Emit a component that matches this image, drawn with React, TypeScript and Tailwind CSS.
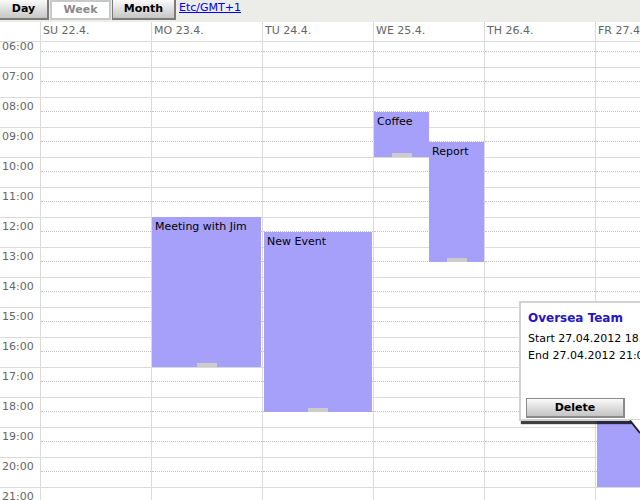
import React from "react";

const days = ["SU 22.4.", "MO 23.4.", "TU 24.4.", "WE 25.4.", "TH 26.4.", "FR 27.4."];
const hours = Array.from({ length: 18 }, (_, i) => i + 6);

type Ev = { day: number; title: string; top: number; height: number; left: number; width: number; hideTitle?: boolean };

// top/height in px from 06:00 (30px per hour)
const events: Ev[] = [
  { day: 1, title: "Meeting with Jim", top: 180, height: 150, left: 0, width: 109 },
  { day: 2, title: "New Event", top: 195, height: 180, left: 1, width: 108 },
  { day: 3, title: "Coffee", top: 75, height: 45, left: 0, width: 55 },
  { day: 3, title: "Report", top: 105, height: 120, left: 55, width: 55 },
  // title sits under the bubble's shadow in the screenshot
  { day: 5, title: "Oversea Team", top: 383, height: 67, left: 1, width: 108, hideTitle: true },
];

const font = { fontFamily: '"DejaVu Sans", Verdana, sans-serif' };

export default function App() {
  return (
    <div className="relative w-[640px] h-[500px] overflow-hidden bg-white text-[11px]" style={font}>
      {/* toolbar */}
      <div className="flex items-start h-[22px] bg-[#ecede9]">
        <button className="w-[49px] h-[20px] bg-gradient-to-b from-[#fafafa] to-[#c6c6c6] border-r-2 border-b-2 border-[#7a7a7a] font-bold text-black leading-[18px]">
          Day
        </button>
        <button className="ml-[1px] w-[61px] h-[20px] bg-white border-2 border-[#c8c8c8] font-bold text-[#8a8a8a] leading-[16px]">
          Week
        </button>
        <button className="ml-[1px] w-[64px] h-[20px] bg-gradient-to-b from-[#fafafa] to-[#c6c6c6] border-l border-r-2 border-b-2 border-[#7a7a7a] font-bold text-black leading-[18px]">
          Month
        </button>
        <a href="#" className="ml-[3px] mt-[1px] text-[#0000ee] underline leading-[14px]">
          Etc/GMT+1
        </a>
      </div>

      {/* day header */}
      <div className="flex h-[20px] border-b border-[#dadada]">
        <div className="w-[40px] shrink-0" />
        {days.map((d) => (
          <div key={d} className="w-[111px] shrink-0 border-l border-[#dadada] pl-[2px] pt-[2px] text-[#666] leading-[14px] whitespace-nowrap">
            {d}
          </div>
        ))}
      </div>

      {/* grid */}
      <div className="h-[458px] overflow-hidden">
        <div className="flex -mt-[5px]">
          <div className="w-[40px] shrink-0">
            {hours.map((h) => (
              <div key={h} className="h-[30px] border-t border-[#dadada] pl-[2px] pt-[2px] text-[#666] leading-[13px]">
                {String(h).padStart(2, "0")}:00
              </div>
            ))}
          </div>
          {days.map((d, di) => (
            <div key={d} className="relative w-[111px] shrink-0 border-l border-[#dadada]">
              {hours.map((h) => (
                <div key={h} className="h-[30px] border-t border-[#dadada]">
                  <div className="h-[14px] border-b border-dotted border-[#c4c4c4]" />
                </div>
              ))}
              {events
                .filter((e) => e.day === di)
                .map((e) => (
                  <div
                    key={e.title}
                    className="absolute bg-[#a6a0fa] text-black leading-[14px] pl-[3px] pt-[3px]"
                    style={{ top: e.top, height: e.height, left: e.left, width: e.width }}
                  >
                    {!e.hideTitle && e.title}
                    <div className="absolute bottom-0 left-1/2 -translate-x-1/2 w-[20px] h-[4px] bg-[#cccccc]" />
                  </div>
                ))}
            </div>
          ))}
        </div>
      </div>

      {/* event bubble */}
      <div className="absolute left-[519px] top-[301px] w-[150px] h-[120px] bg-white border-2 border-[#d2d2d2] shadow-[2px_3px_1px_rgba(0,0,0,0.75)] px-[7px] pt-[7px]">
        <div className="font-bold text-[12px] text-[#2414c4] leading-[16px]">Oversea Team</div>
        <div className="mt-[4px] leading-[17px] text-black whitespace-nowrap">Start 27.04.2012 18:45</div>
        <div className="leading-[17px] text-black whitespace-nowrap">End 27.04.2012 21:00</div>
        <button className="mt-[34px] -ml-[2px] w-[99px] h-[20px] bg-gradient-to-b from-[#fafafa] to-[#c4c4c4] border border-[#8a8a8a] border-r-2 border-b-2 font-bold text-black leading-[16px]">
          Delete
        </button>
      </div>
      <svg className="absolute left-[626px] top-[419px]" width="14" height="16" viewBox="0 0 14 16">
        <polygon points="4,1 14,1 14,14" fill="#ffffff" />
        <line x1="4" y1="1.5" x2="14" y2="14" stroke="#222" strokeWidth="2" />
      </svg>
    </div>
  );
}
